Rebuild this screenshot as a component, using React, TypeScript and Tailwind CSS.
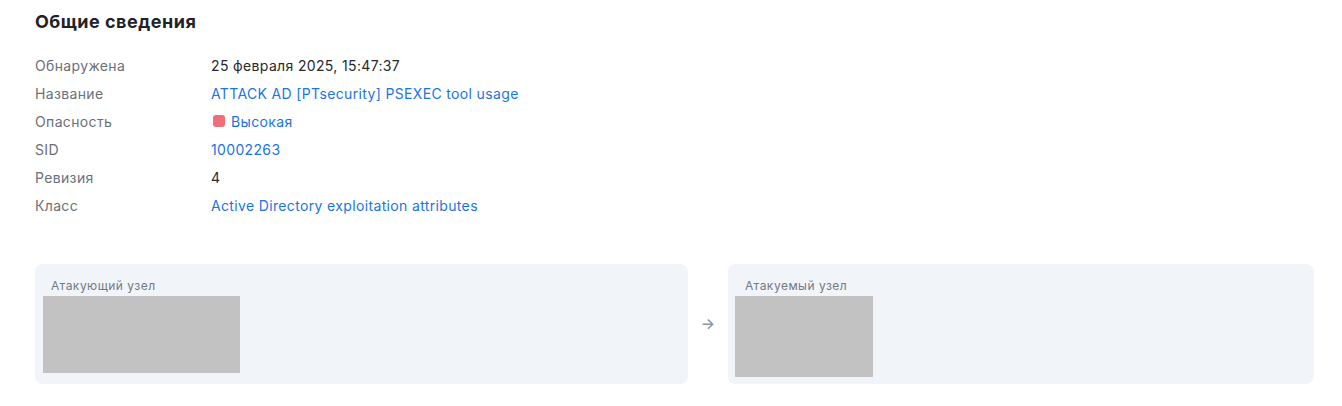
const rows: {label: string; value: string; kind: 'text' | 'link' | 'severity'}[] = [
  {label: 'Обнаружена', value: '25 февраля 2025, 15:47:37', kind: 'text'},
  {label: 'Название', value: 'ATTACK AD [PTsecurity] PSEXEC tool usage', kind: 'link'},
  {label: 'Опасность', value: 'Высокая', kind: 'severity'},
  {label: 'SID', value: '10002263', kind: 'link'},
  {label: 'Ревизия', value: '4', kind: 'text'},
  {label: 'Класс', value: 'Active Directory exploitation attributes', kind: 'link'},
];

function NodeCard({title, className, labelClass, imgClass}: {title: string; className: string; labelClass: string; imgClass: string}) {
  return (
    <div className={`h-[120px] rounded-lg bg-[#f1f4f9] pt-[12px] ${className}`}>
      <div className={`text-[12px] leading-[20px] tracking-[0.5px] text-[#737a85] ${labelClass}`}>{title}</div>
      <div className={`bg-[#c2c2c2] ${imgClass}`} />
    </div>
  );
}

export default function App() {
  return (
    <div className="min-h-[406px] bg-white pl-[35px] pr-[28px] pt-[9px] font-['Inter','Noto_Sans',sans-serif] text-[14px]">
      <h2 className="text-[18px] font-bold leading-[26px] tracking-[0.5px] text-[#1f2329]">Общие сведения</h2>

      <div className="mt-[16px] flex flex-col tracking-[0.35px]">
        {rows.map((r) => (
          <div key={r.label} className="flex h-[28px] items-center">
            <div className="w-[176px] text-[#6b7079]">{r.label}</div>
            {r.kind === 'text' && <div className="text-[#26292e]">{r.value}</div>}
            {r.kind === 'link' && <a className="cursor-pointer text-[#1b74e4]">{r.value}</a>}
            {r.kind === 'severity' && (
              <div className="flex items-center gap-[6px] pl-[2px]">
                <span className="h-[12px] w-[12px] rounded-[3px] bg-[#ec6f7b]" />
                <a className="cursor-pointer text-[#1b74e4]">{r.value}</a>
              </div>
            )}
          </div>
        ))}
      </div>

      <div className="mt-[45px] flex items-center">
        <NodeCard title="Атакующий узел" className="w-[653px] px-2" labelClass="px-2" imgClass="h-[77px] w-[197px]" />
        <div className="flex w-[40px] justify-center text-[15px] font-semibold text-[#8f969f]">→</div>
        <NodeCard title="Атакуемый узел" className="flex-1 px-[7px]" labelClass="px-[10px]" imgClass="h-[81px] w-[138px]" />
      </div>
    </div>
  );
}
